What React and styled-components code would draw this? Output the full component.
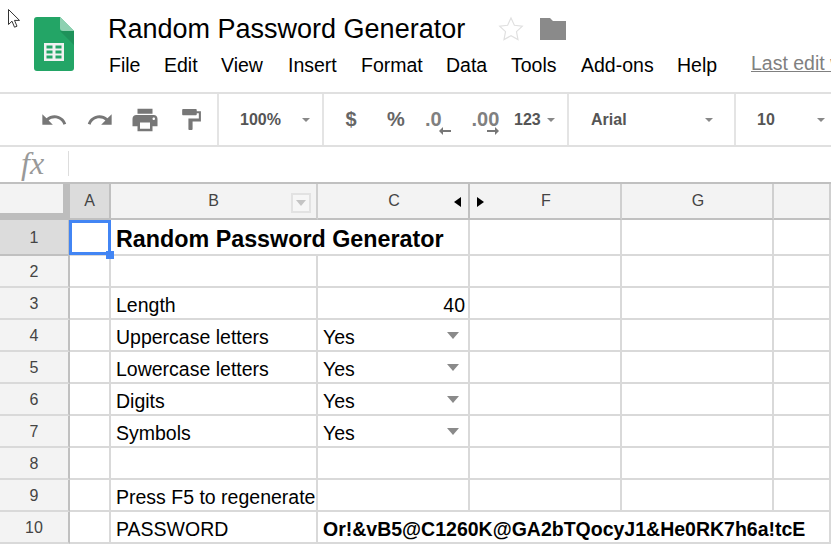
import React from "react";
import styled, { createGlobalStyle } from "styled-components";

const GlobalStyle = createGlobalStyle`
  html, body {
    margin: 0;
    padding: 0;
    background: #fff;
    overflow: hidden;
  }
  body {
    font-family: "Liberation Sans", Arial, sans-serif;
    color: #000;
  }
`;

const Page = styled.div`
  position: relative;
  width: 831px;
  height: 545px;
  overflow: hidden;
`;

const Cursor = styled.svg`
  position: absolute;
  left: 8px;
  top: 9px;
`;

const Header = styled.header`
  display: flex;
  height: 92px;
  box-sizing: border-box;
  padding-left: 34px;
`;

const LogoBox = styled.div`
  width: 74px;
  padding-top: 17px;
`;

const TitleColumn = styled.div`
  flex: 1;
  min-width: 0;
  padding-top: 12px;
`;

const TitleRow = styled.div`
  display: flex;
  align-items: center;
  height: 34px;
`;

const Title = styled.h1`
  margin: 0;
  font-size: 27px;
  font-weight: 400;
  white-space: nowrap;
`;

const TitleIcons = styled.div`
  display: flex;
  align-items: center;
  margin-left: 32px;
  gap: 15px;
`;

const Menu = styled.nav`
  display: flex;
  align-items: baseline;
  margin-top: 8px;
  padding-left: 1px;
  font-size: 19.5px;
  white-space: nowrap;
`;

const MenuItem = styled.span`
  width: ${(p) => p.$w}px;
  flex: none;
`;

const LastEdit = styled.span`
  flex: none;
  color: #808080;
  text-decoration: underline;
  position: relative;
  top: -2px;
`;

const Toolbar = styled.div`
  display: flex;
  height: 51px;
  border-top: 2px solid #e0e0e0;
  border-bottom: 2px solid #e0e0e0;
`;

const ToolGroup = styled.div`
  display: flex;
  align-items: center;
  width: ${(p) => p.$w}px;
  flex: none;
  box-sizing: border-box;
  padding-left: ${(p) => p.$pad || 0}px;
  border-right: ${(p) => (p.$last ? "none" : "2px solid #e4e4e4")};
`;

const ToolSlot = styled.div`
  display: flex;
  align-items: center;
  justify-content: center;
  flex: none;
  width: ${(p) => p.$w}px;
  font-size: 20px;
  font-weight: 700;
  color: #666;
`;

const ToolLabel = styled.span`
  flex: none;
  width: ${(p) => p.$w}px;
  font-size: 16px;
  font-weight: 700;
  color: #555;
`;

const Caret = styled.span`
  flex: none;
  width: 0;
  height: 0;
  border-left: 4px solid transparent;
  border-right: 4px solid transparent;
  border-top: 4px solid #888;
`;

const DecimalBtn = styled.div`
  position: relative;
  width: ${(p) => p.$w}px;
  height: 24px;
  padding-top: 2px;
  font-size: 20px;
  font-weight: 700;
  color: #808080;
  line-height: 20px;
  text-align: left;
`;

const DecimalArrow = styled.svg`
  position: absolute;
  bottom: -3px;
  right: ${(p) => p.$right}px;
`;

const FormulaBar = styled.div`
  display: flex;
  align-items: center;
  height: 35px;
`;

const FxLabel = styled.span`
  width: 69px;
  box-sizing: border-box;
  padding-left: 21px;
  font-family: "Liberation Serif", serif;
  font-style: italic;
  font-size: 32px;
  color: #999;
  border-right: 1px solid #ddd;
  line-height: 25px;
  height: 25px;
  margin-top: -3px;
`;

const Grid = styled.div`
  display: grid;
  grid-template-columns: 70px 41px 207px 152px 152px 152px 57px;
  grid-template-rows: 36px 36px repeat(9, 32px);
  border-top: 2px solid #c0c0c0;
`;

const HeadCell = styled.div`
  position: relative;
  display: flex;
  align-items: center;
  justify-content: center;
  box-sizing: border-box;
  padding-left: ${(p) => (p.$nudge ? 2 : 0)}px;
  font-size: 16px;
  color: #444;
  background: ${(p) => (p.$active ? "#dcdcdc" : "#f3f3f3")};
  border-right: 2px solid ${(p) => (p.$strong ? "#c0c0c0" : "#cfcfcf")};
  border-bottom: 2px solid #c0c0c0;
`;

const Corner = styled(HeadCell)`
  background: #f3f3f3;
  border-right: 7px solid #bdbdbd;
  border-bottom: 7px solid #bdbdbd;
`;

const RowHead = styled.div`
  display: flex;
  align-items: center;
  justify-content: center;
  box-sizing: border-box;
  padding-top: 2px;
  font-size: 16px;
  color: #444;
  background: ${(p) => (p.$active ? "#dcdcdc" : "#f3f3f3")};
  border-right: 2px solid #c0c0c0;
  border-bottom: 2px solid ${(p) => (p.$active ? "#c0c0c0" : "#d9d9d9")};
`;

const Cell = styled.div`
  position: relative;
  display: flex;
  align-items: center;
  justify-content: ${(p) => (p.$right ? "flex-end" : "space-between")};
  box-sizing: border-box;
  padding: 5px ${(p) => (p.$right ? 3 : 5)}px 0 5px;
  grid-column: ${(p) => (p.$span ? `span ${p.$span}` : "auto")};
  font-size: ${(p) => p.$size || 19.5}px;
  font-weight: ${(p) => (p.$bold ? 700 : 400)};
  white-space: nowrap;
  border-right: 2px solid #d9d9d9;
  border-bottom: 2px solid #d9d9d9;
`;

const Selection = styled.div`
  position: absolute;
  z-index: 2;
  left: -1px;
  top: 0;
  right: -2px;
  bottom: -1px;
  border: 3px solid #4285f4;
`;

const Handle = styled.div`
  position: absolute;
  right: -6px;
  bottom: -7px;
  width: 8px;
  height: 8px;
  background: #4285f4;
`;

const DropCaret = styled.span`
  width: 0;
  height: 0;
  margin-right: 4px;
  margin-top: -5px;
  border-left: 6px solid transparent;
  border-right: 6px solid transparent;
  border-top: 7px solid #8a8a8a;
`;

const FilterBtn = styled.div`
  position: absolute;
  right: 5px;
  top: 9px;
  width: 20px;
  height: 20px;
  box-sizing: border-box;
  display: flex;
  align-items: center;
  justify-content: center;
  border: 2px solid #e2e2e2;
  background: #f6f6f6;
`;

const FilterCaret = styled.span`
  width: 0;
  height: 0;
  border-left: 5px solid transparent;
  border-right: 5px solid transparent;
  border-top: 6px solid #c4c4c4;
`;

const HiddenArrow = styled.span`
  position: absolute;
  top: 13px;
  ${(p) => (p.$side === "left" ? "right: 7px;" : "left: 7px;")}
  width: 0;
  height: 0;
  border-top: 5px solid transparent;
  border-bottom: 5px solid transparent;
  ${(p) =>
    p.$side === "left"
      ? "border-right: 7px solid #000;"
      : "border-left: 7px solid #000;"}
`;

const SheetsLogo = () => (
  <svg width="40" height="54" viewBox="0 0 40 54">
    <path d="M3 0h23l14 14v37a3 3 0 0 1-3 3H3a3 3 0 0 1-3-3V3a3 3 0 0 1 3-3z" fill="#23a566" />
    <path d="M26 14l14 14V14z" fill="#1c8a55" opacity="0.7" />
    <path d="M26 0l14 14H29a3 3 0 0 1-3-3z" fill="#8ed1b1" />
    <path d="M10 26h20v18H10z" fill="#f1f1f1" />
    <path d="M12.500 28.500h6v3h-6zM21.500 28.500h6v3h-6zM12.500 33.500h6v3h-6zM21.500 33.500h6v3h-6zM12.500 38.500h6v3h-6zM21.500 38.500h6v3h-6z" fill="#23a566" />
  </svg>
);

const Icon = ({ d, size = 28, color = "#777" }) => (
  <svg width={size} height={size} viewBox="0 0 24 24" fill={color}>
    <path d={d} />
  </svg>
);

const icons = {
  undo: "M12.5 8c-2.65 0-5.05.99-6.9 2.6L2 7v9h9l-3.62-3.62c1.39-1.16 3.16-1.88 5.12-1.88 3.54 0 6.55 2.31 7.6 5.5l2.37-.78C21.08 11.03 17.15 8 12.5 8z",
  redo: "M18.4 10.6C16.55 8.99 14.15 8 11.5 8c-4.65 0-8.58 3.03-9.96 7.22L3.9 16c1.05-3.19 4.05-5.5 7.6-5.5 1.95 0 3.73.72 5.12 1.88L13 16h9V7l-3.6 3.6z",
  print: "M19 8H5c-1.66 0-3 1.34-3 3v6h4v4h12v-4h4v-6c0-1.66-1.34-3-3-3zm-3 11H8v-5h8v5zm3-7c-.55 0-1-.45-1-1s.45-1 1-1 1 .45 1 1-.45 1-1 1zm-1-9H6v4h12V3z",
  paint: "M18 4V3c0-.55-.45-1-1-1H5c-.55 0-1 .45-1 1v4c0 .55.45 1 1 1h12c.55 0 1-.45 1-1V6h2v5H10v10c0 .55.45 1 1 1h2c.55 0 1-.45 1-1v-7h8V4h-4z",
};

const menuItems = [
  ["File", 55],
  ["Edit", 57],
  ["View", 67],
  ["Insert", 73],
  ["Format", 85],
  ["Data", 65],
  ["Tools", 70],
  ["Add-ons", 96],
  ["Help", 74],
];

const columns = ["A", "B", "C", "F", "G", ""];

// what each row holds in columns B and C; rows not listed are empty
const rows = {
  3: { b: "Length", c: "40", right: true },
  4: { b: "Uppercase letters", c: "Yes", drop: true },
  5: { b: "Lowercase letters", c: "Yes", drop: true },
  6: { b: "Digits", c: "Yes", drop: true },
  7: { b: "Symbols", c: "Yes", drop: true },
  9: { b: "Press F5 to regenerate" },
};

const PASSWORD = "Or!&vB5@C1260K@GA2bTQocyJ1&He0RK7h6a!tcE";

const App = () => {
  const rowNumbers = Array.from({ length: 10 }, (_, i) => i + 1);
  return (
    <Page>
      <GlobalStyle />
      <Header>
        <LogoBox>
          <SheetsLogo />
        </LogoBox>
        <TitleColumn>
          <TitleRow>
            <Title>Random Password Generator</Title>
            <TitleIcons>
              <svg width="28" height="28" viewBox="0 0 24 24" fill="none" stroke="#e0e0e0" strokeWidth="1">
                <path d="M12 2.500l2.900 6.300 6.800.8-5 4.700 1.300 6.800-6-3.400-6 3.400 1.300-6.800-5-4.700 6.800-.8z" />
              </svg>
              <svg width="26" height="22" viewBox="0 0 26 22" fill="#8a8a8a">
                <path d="M0 0h10l3 3h13v19H0z" />
              </svg>
            </TitleIcons>
          </TitleRow>
          <Menu>
            {menuItems.map(([label, w]) => (
              <MenuItem key={label} $w={w}>{label}</MenuItem>
            ))}
            <LastEdit>Last edit was</LastEdit>
          </Menu>
        </TitleColumn>
      </Header>

      <Toolbar>
        <ToolGroup $w={219} $pad={31}>
          <ToolSlot $w={46}><Icon d={icons.undo} /></ToolSlot>
          <ToolSlot $w={45}><Icon d={icons.redo} /></ToolSlot>
          <ToolSlot $w={46}><Icon d={icons.print} size={30} /></ToolSlot>
          <ToolSlot $w={44}><Icon d={icons.paint} size={25} /></ToolSlot>
        </ToolGroup>
        <ToolGroup $w={105} $pad={21}>
          <ToolLabel $w={62}>100%</ToolLabel>
          <Caret />
        </ToolGroup>
        <ToolGroup $w={245} $pad={5}>
          <ToolSlot $w={44}>$</ToolSlot>
          <ToolSlot $w={46}>%</ToolSlot>
          <ToolSlot $w={36}>
            <DecimalBtn $w={24}>
              .0
              <DecimalArrow $right={-2} width="12" height="10" viewBox="0 0 12 10" fill="#777">
                <path d="M12 4H4V1L0 5l4 4V6h8z" />
              </DecimalArrow>
            </DecimalBtn>
          </ToolSlot>
          <ToolSlot $w={59}>
            <DecimalBtn $w={26}>
              .00
              <DecimalArrow $right={-1} width="12" height="10" viewBox="0 0 12 10" fill="#777">
                <path d="M0 4h8V1l4 4-4 4V6H0z" />
              </DecimalArrow>
            </DecimalBtn>
          </ToolSlot>
          <ToolLabel $w={33}>123</ToolLabel>
          <Caret />
        </ToolGroup>
        <ToolGroup $w={167} $pad={22}>
          <ToolLabel $w={114}>Arial</ToolLabel>
          <Caret />
        </ToolGroup>
        <ToolGroup $w={95} $pad={21} $last>
          <ToolLabel $w={60}>10</ToolLabel>
          <Caret />
        </ToolGroup>
      </Toolbar>

      <FormulaBar>
        <FxLabel>fx</FxLabel>
      </FormulaBar>

      <Grid>
        <Corner />
        {columns.map((col) => (
          <HeadCell
            key={col || "rest"}
            $active={col === "A"}
            $strong={col === "A" || col === "C"}
            $nudge={col === "C" || col === "F" || col === "G"}
          >
            {col}
            {col === "B" && (
              <FilterBtn>
                <FilterCaret />
              </FilterBtn>
            )}
            {col === "C" && <HiddenArrow $side="left" />}
            {col === "F" && <HiddenArrow $side="right" />}
          </HeadCell>
        ))}

        {rowNumbers.map((n) => {
          const row = rows[n] || {};
          if (n === 1) {
            return (
              <React.Fragment key={n}>
                <RowHead $active>{n}</RowHead>
                <Cell>
                  <Selection>
                    <Handle />
                  </Selection>
                </Cell>
                <Cell $span={2} $bold $size={23.3}>Random Password Generator</Cell>
                <Cell />
                <Cell />
                <Cell />
              </React.Fragment>
            );
          }
          if (n === 10) {
            return (
              <React.Fragment key={n}>
                <RowHead>{n}</RowHead>
                <Cell />
                <Cell>PASSWORD</Cell>
                <Cell $span={4} $bold>{PASSWORD}</Cell>
              </React.Fragment>
            );
          }
          return (
            <React.Fragment key={n}>
              <RowHead>{n}</RowHead>
              <Cell />
              <Cell>{row.b}</Cell>
              <Cell $right={row.right}>
                {row.c}
                {row.drop && <DropCaret />}
              </Cell>
              <Cell />
              <Cell />
              <Cell />
            </React.Fragment>
          );
        })}
      </Grid>

      <Cursor width="13" height="20" viewBox="0 0 13 20" fill="#fff" stroke="#333" strokeWidth="1">
        <path d="M.5.500v15l3.500-3.300 2.500 6 2.500-1-2.500-5.800h5z" />
      </Cursor>
    </Page>
  );
};

export default App;
